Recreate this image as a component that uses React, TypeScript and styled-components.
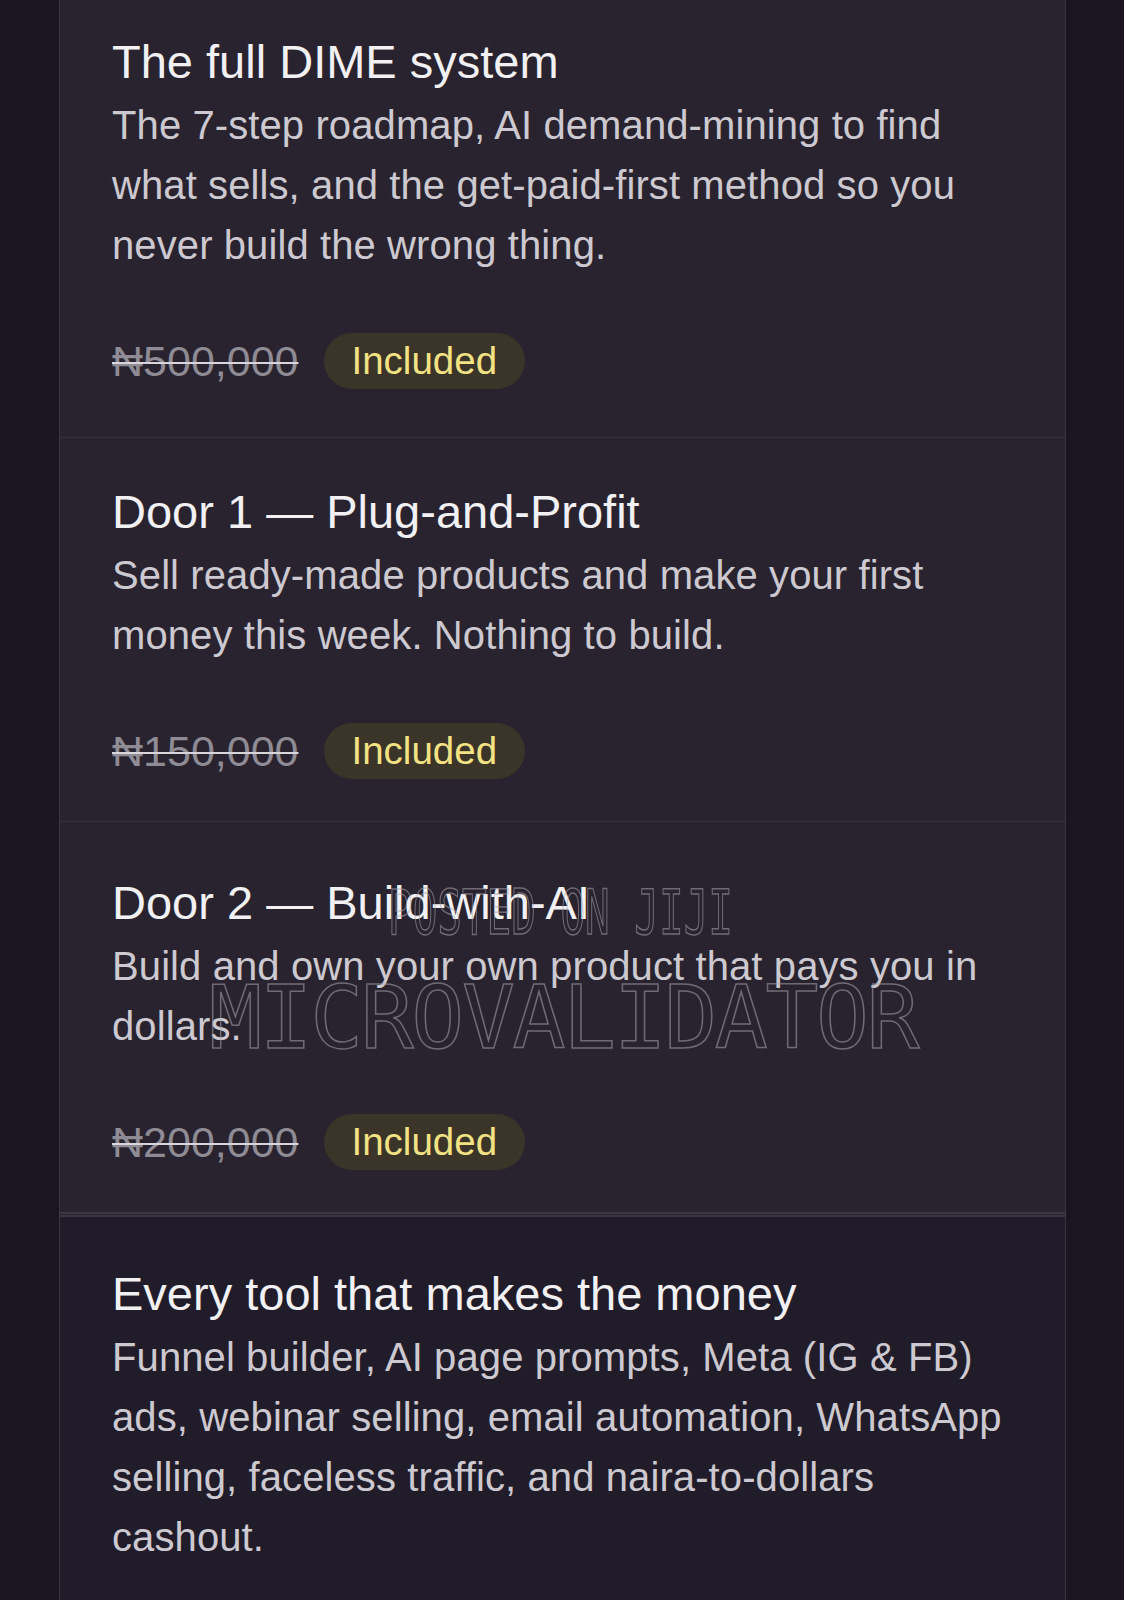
import React from 'react'
import styled, { createGlobalStyle } from 'styled-components'

const GlobalStyle = createGlobalStyle`
  html, body {
    margin: 0;
    padding: 0;
    background: #1a1520;
  }
  body {
    font-family: 'Liberation Sans', Arial, sans-serif;
  }
`

const Page = styled.div`
  position: relative;
  height: 1600px;
  overflow: hidden;
  padding: 0 58px 0 59px;
  background: #1a1520;
`

const Panel = styled.div`
  margin-top: -6px;
  background: #28232e;
  border-left: 1px solid #3a3540;
  border-right: 1px solid #3a3540;
`

interface SectionProps {
  $dark?: boolean
  $double?: boolean
}

const Section = styled.div<SectionProps>`
  padding: ${({ $dark, $double }) => ($dark ? '47px' : $double ? '51px' : '44px')}
    40px 42px 52px;
  background: ${({ $dark }) => ($dark ? '#211c29' : '#28232e')};
  border-bottom: ${({ $double }) =>
    $double ? '5px double #3b3640' : '1px solid #35303a'};

  &:first-child {
    padding-top: 38px;
    padding-bottom: 48px;
  }
`

const Title = styled.div`
  font-size: 47px;
  line-height: 60px;
  color: #f1f0f2;
`

const Body = styled.div`
  margin-top: 3px;
  max-width: 910px;
  font-size: 40px;
  line-height: 60px;
  letter-spacing: 0.1px;
  color: #cdc9d0;
`

const PriceRow = styled.div`
  display: flex;
  align-items: center;
  gap: 25px;
  margin-top: 58px;
`

const OldPrice = styled.span`
  font-size: 43px;
  color: #8f8b94;
  text-decoration: line-through;
  text-decoration-color: #d8d5db;
  text-decoration-thickness: 2px;
`

const Badge = styled.span`
  display: inline-flex;
  align-items: center;
  height: 56px;
  padding: 0 28px;
  border-radius: 28px;
  background: #3b3429;
  color: #f2e284;
  font-size: 38.5px;
`

const Watermark = styled.div`
  position: absolute;
  left: 0;
  right: 0;
  pointer-events: none;
  font-family: 'DejaVu Sans Mono', monospace;
  color: transparent;
  -webkit-text-stroke: 1.5px rgba(170, 166, 175, 0.55);
  white-space: nowrap;
`

const WatermarkSmall = styled(Watermark)`
  top: 882px;
  left: 388px;
  font-size: 62px;
  line-height: 62px;
  transform: scaleX(0.66);
  transform-origin: left top;
`

const WatermarkBig = styled(Watermark)`
  top: 974px;
  left: 209px;
  font-size: 88px;
  line-height: 88px;
  letter-spacing: -2.4px;
`

interface Item {
  title: string
  body: string
  price?: string
}

const items: Item[] = [
  {
    title: 'The full DIME system',
    body: 'The 7-step roadmap, AI demand-mining to find what sells, and the get-paid-first method so you never build the wrong thing.',
    price: '₦500,000',
  },
  {
    title: 'Door 1 — Plug-and-Profit',
    body: 'Sell ready-made products and make your first money this week. Nothing to build.',
    price: '₦150,000',
  },
  {
    title: 'Door 2 — Build-with-AI',
    body: 'Build and own your own product that pays you in dollars.',
    price: '₦200,000',
  },
  {
    title: 'Every tool that makes the money',
    body: 'Funnel builder, AI page prompts, Meta (IG & FB) ads, webinar selling, email automation, WhatsApp selling, faceless traffic, and naira-to-dollars cashout.',
  },
]

export default function App() {
  return (
    <>
      <GlobalStyle />
      <Page>
        <Panel>
          {items.map((item, i) => (
            <Section key={item.title} $dark={i === 3} $double={i === 2}>
              <Title>{item.title}</Title>
              <Body>{item.body}</Body>
              {item.price && (
                <PriceRow>
                  <OldPrice>{item.price}</OldPrice>
                  <Badge>Included</Badge>
                </PriceRow>
              )}
            </Section>
          ))}
        </Panel>
        <WatermarkSmall>POSTED ON JIJI</WatermarkSmall>
        <WatermarkBig>MICROVALIDATOR</WatermarkBig>
      </Page>
    </>
  )
}
